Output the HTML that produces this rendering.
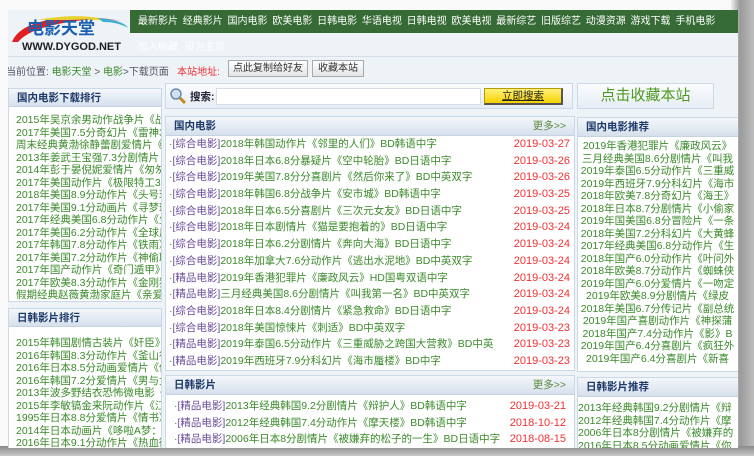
<!DOCTYPE html>
<html><head><meta charset="utf-8"><style>
*{margin:0;padding:0;box-sizing:border-box}
body{width:754px;height:456px;overflow:hidden;position:relative;font-family:"Liberation Sans","Noto Sans CJK SC",sans-serif;font-size:10.5px;color:#333;background:linear-gradient(90deg,#fafafa 0,#fafafa 730px,#9a9a9a 740px,#bdbdbd 754px)}
.shadowb{position:absolute;left:0;top:446px;width:754px;height:10px;background:linear-gradient(#8a8a8a,#c8c8c8)}
.page{position:absolute;left:8px;top:10px;width:730px;height:438px;background:#eef3f8;overflow:hidden}
.a{position:absolute;white-space:nowrap}
.nav{left:122px;top:0;width:608px;height:23px;background:#366b35;color:#fff;font-size:10px;line-height:23px;padding-left:8px;word-spacing:2px;overflow:hidden}
.box{position:absolute;background:#fff;border:1px solid #cbd8e6;overflow:hidden}
.hd{height:18px;background:linear-gradient(#f4f7fb,#d6e0ec);border-bottom:1px solid #c4d2e2;color:#1e3a6a;font-weight:bold;font-size:10.5px;line-height:18px;padding-left:8px;position:relative}
.more{position:absolute;right:8px;top:0;font-weight:normal;color:#5a8a3a}
.gl{color:#3a8a2a;font-size:10.5px;line-height:12.5px;white-space:nowrap}
.rows div{height:16.7px;line-height:16.7px;font-size:10.5px;color:#3a8a2a;position:relative;white-space:nowrap;padding-left:3px}
.rows b{font-weight:normal;color:#6a4c9c}
.rows i{font-style:normal;position:absolute;right:4px;top:0;color:#f03030;background:#fff;padding-left:4px;font-size:11px}
.c{text-align:center}
</style></head><body>
<div class="shadowb"></div>
<div class="page">
 <div class="a" style="left:0;top:2px;width:122px;height:40px;">
  <svg width="122" height="40"><path d="M4 30 Q10 14 40 8 Q80 2 118 10 Q90 4 50 12 Q20 18 10 30Z" fill="#e02020"/><path d="M30 8 Q80 -2 120 14 Q100 6 60 8Z" fill="#e8d030"/><path d="M90 6 Q115 8 120 16 Q110 10 95 10Z" fill="#3ab0d0"/>
  <text x="19" y="22" font-size="17" font-weight="bold" fill="#1b5fb0" font-family="Noto Sans CJK SC">电影天堂</text>
  <text x="14" y="38" font-size="11" font-weight="bold" fill="#222" font-family="Liberation Sans">WWW.DYGOD.NET</text></svg>
 </div>
 <div class="a nav">最新影片 经典影片 国内电影 欧美电影 日韩电影 华语电视 日韩电视 欧美电视 最新综艺 旧版综艺 动漫资源 游戏下载 手机电影</div>
 <div class="a" style="left:130px;top:28px;color:#fff;font-size:10px;word-spacing:4px">加入收藏 设为主页</div>
 <div class="a" style="left:0;top:46px;width:730px;border-top:1px solid #d4dde8"></div>
 <div class="a" style="left:-2px;top:53px;font-size:10px;color:#556">当前位置: <span style="color:#3a8a2a">电影天堂</span> &gt; <span style="color:#3a8a2a">电影</span>&gt;下载页面 &nbsp; <span style="color:#f03030">本站地址:</span></div>
 <div class="a" style="left:220px;top:50px;width:80px;height:17px;border:1px solid #aaa;background:linear-gradient(#fff,#e4e4e4);font-size:10px;line-height:15px;text-align:center">点此复制给好友</div>
 <div class="a" style="left:304px;top:50px;width:52px;height:17px;border:1px solid #aaa;background:linear-gradient(#fff,#e4e4e4);font-size:10px;line-height:15px;text-align:center">收藏本站</div>

 <div class="box" style="left:0;top:78px;width:154px;height:214px">
  <div class="hd">国内电影下载排行</div>
  <div class="gl" style="padding:7px 0 0 7px">2015年吴京余男动作战争片《战<br>2017年美国7.5分奇幻片《雷神3<br>周末经典黄渤徐静蕾剧爱情片《<br>2013年姜武王宝强7.3分剧情片《<br>2014年彭于晏倪妮爱情片《匆匆<br>2017年美国动作片《极限特工3》<br>2018年美国8.9分动作片《头号玩<br>2017年美国9.1分动画片《寻梦环<br>2017年经典美国6.8分动作片《生<br>2017年美国6.2分动作片《全球风<br>2017年韩国7.8分动作片《铁雨》<br>2017年美国7.2分动作片《神偷联<br>2017年国产动作片《奇门遁甲》<br>2017年欧美8.3分动作片《金刚狼<br>假期经典赵薇黄渤家庭片《亲爱</div>
 </div>
 <div class="box" style="left:0;top:298px;width:154px;height:145px">
  <div class="hd">日韩影片排行</div>
  <div class="gl" style="padding:10px 0 0 7px">2015年韩国剧情古装片《奸臣》<br>2016年韩国8.3分动作片《釜山行<br>2016年日本8.5分动画爱情片《你<br>2016年韩国7.2分爱情片《男与女<br>2013年波多野结衣恐怖微电影《<br>2015年李敏镐金来阮动作片《江<br>1995年日本8.8分爱情片《情书》<br>2014年日本动画片《哆啦A梦：伴<br>2016年日本9.1分动作片《热血街</div>
 </div>

 <div class="box" style="left:157px;top:73px;width:408px;height:26px;background:linear-gradient(#fbfcfe,#e6edf5)">
  <svg class="a" style="left:3px;top:3px" width="18" height="18"><circle cx="7" cy="7" r="5" fill="#cfe0f0" stroke="#6a8ab0" stroke-width="1.5"/><path d="M11 11 L16 16" stroke="#c08a20" stroke-width="3"/></svg>
  <div class="a" style="left:24px;top:5px;font-weight:bold;font-size:10.5px;color:#223">搜索:</div>
  <div class="a" style="left:50px;top:4px;width:265px;height:17px;background:#fff;border:1px solid #d6dde6"></div>
  <div class="a" style="left:318px;top:4px;width:79px;height:17px;background:linear-gradient(#fff27a,#f5d000);border:1px solid #b89a00;border-right:2px solid #555;border-bottom:2px solid #555;text-align:center;line-height:14px;font-size:10.5px;text-decoration:underline;color:#222">立即搜索</div>
 </div>
 <div class="box" style="left:569px;top:73px;width:137px;height:26px;background:linear-gradient(#fbfcfe,#e6edf5);text-align:center;line-height:24px;font-size:15px;color:#4e9a1e">点击收藏本站</div>

 <div class="box" style="left:157px;top:106px;width:410px;height:255px">
  <div class="hd" style="height:19px;line-height:19px">国内电影<span class="more">更多&gt;&gt;</span></div>
  <div class="rows" style="padding-top:0px">
<div>·<b>[综合电影]</b>2018年韩国动作片《邻里的人们》BD韩语中字<i>2019-03-27</i></div>
<div>·<b>[综合电影]</b>2018年日本6.8分暴疑片《空中轮胎》BD日语中字<i>2019-03-26</i></div>
<div>·<b>[综合电影]</b>2019年美国7.8分分喜剧片《然后你来了》BD中英双字<i>2019-03-26</i></div>
<div>·<b>[综合电影]</b>2018年韩国6.8分战争片《安市城》BD韩语中字<i>2019-03-25</i></div>
<div>·<b>[综合电影]</b>2018年日本6.5分喜剧片《三次元女友》BD日语中字<i>2019-03-25</i></div>
<div>·<b>[综合电影]</b>2018年日本剧情片《猫是要抱着的》BD日语中字<i>2019-03-24</i></div>
<div>·<b>[综合电影]</b>2018年日本6.2分剧情片《奔向大海》BD日语中字<i>2019-03-24</i></div>
<div>·<b>[综合电影]</b>2018年加拿大7.6分动作片《逃出水泥地》BD中英双字<i>2019-03-24</i></div>
<div>·<b>[精品电影]</b>2019年香港犯罪片《廉政风云》HD国粤双语中字<i>2019-03-24</i></div>
<div>·<b>[精品电影]</b>三月经典美国8.6分剧情片《叫我第一名》BD中英双字<i>2019-03-24</i></div>
<div>·<b>[综合电影]</b>2018年日本8.4分剧情片《紧急救命》BD日语中字<i>2019-03-24</i></div>
<div>·<b>[综合电影]</b>2018年美国惊悚片《刺适》BD中英双字<i>2019-03-23</i></div>
<div>·<b>[精品电影]</b>2019年泰国6.5分动作片《三重威胁之跨国大营救》BD中英<i>2019-03-23</i></div>
<div>·<b>[精品电影]</b>2019年西班牙7.9分科幻片《海市蜃楼》BD中字<i>2019-03-23</i></div>
  </div>
 </div>
 <div class="box" style="left:157px;top:365px;width:410px;height:80px">
  <div class="hd" style="height:19px;line-height:19px">日韩影片<span class="more">更多&gt;&gt;</span></div>
  <div class="rows" style="padding-top:3px;padding-left:5px">
<div>·<b>[精品电影]</b>2013年经典韩国9.2分剧情片《辩护人》BD韩语中字<i style="right:8px">2019-03-21</i></div>
<div>·<b>[精品电影]</b>2012年经典韩国7.4分动作片《摩天楼》BD韩语中字<i style="right:8px">2018-10-12</i></div>
<div>·<b>[精品电影]</b>2006年日本8分剧情片《被嫌弃的松子的一生》BD日语中字<i style="right:8px">2018-08-15</i></div>
  </div>
 </div>

 <div class="box" style="left:569px;top:107px;width:165px;height:255px">
  <div class="hd" style="height:19px;line-height:19px">国内电影推荐</div>
  <div class="gl c" style="padding:3px 4px 0 0">2019年香港犯罪片《廉政风云》<br>三月经典美国8.6分剧情片《叫我<br>2019年泰国6.5分动作片《三重威<br>2019年西班牙7.9分科幻片《海市<br>2018年欧美7.8分奇幻片《海王》<br>2018年日本8.7分剧情片《小偷家<br>2019年国美国6.8分冒险片《一条<br>2018年美国7.2分科幻片《大黄蜂<br>2017年经典美国6.8分动作片《生<br>2018年国产6.0分动作片《叶问外<br>2018年欧美8.7分动作片《蜘蛛侠<br>2019年国产6.0分爱情片《一吻定<br>2019年欧美8.9分剧情片《绿皮<br>2018年美国6.7分传记片《副总统<br>2019年国产喜剧动作片《神探蒲<br>2018年国产7.4分动作片《影》B<br>2019年国产6.4分喜剧片《疯狂外<br>2019年国产6.4分喜剧片《新喜</div>
 </div>
 <div class="box" style="left:569px;top:367px;width:165px;height:80px">
  <div class="hd" style="height:19px;line-height:19px">日韩影片推荐</div>
  <div class="gl c" style="padding:5px 10px 0 0">2013年经典韩国9.2分剧情片《辩<br>2012年经典韩国7.4分动作片《摩<br>2006年日本8分剧情片《被嫌弃的<br>2016年日本8.5分动画爱情片《你</div>
 </div>
</div>
</body></html>
